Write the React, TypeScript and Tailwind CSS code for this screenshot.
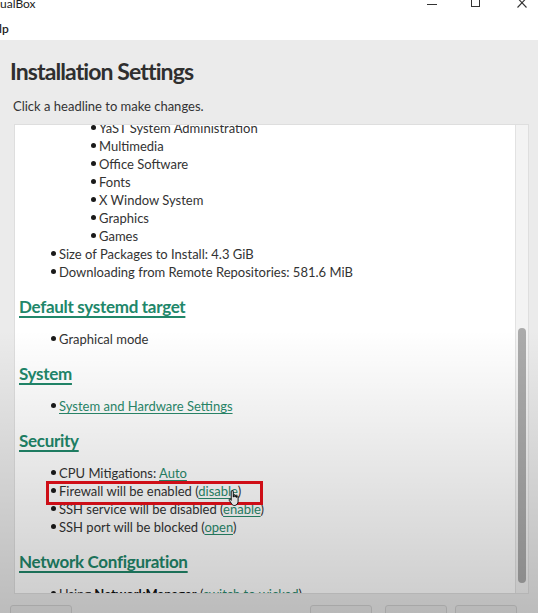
import React from 'react';

const font = { fontFamily: 'Lato, "Open Sans", sans-serif' };

const Dot = ({ className = '' }: { className?: string }) => (
  <span className={`inline-block w-[5px] h-[5px] rounded-full bg-[#1a1a1a] mr-[3px] mb-[2px] ${className}`} />
);

const Item = ({ children, sub }: { children: React.ReactNode; sub?: boolean }) => (
  <div className={`h-[18px] leading-[18px] flex items-center whitespace-nowrap ${sub ? 'pl-[76px]' : 'pl-[36px]'}`}>
    <Dot />
    <span>{children}</span>
  </div>
);

const Link = ({ children }: { children: React.ReactNode }) => (
  <span className="text-[#2a8a6c] underline decoration-[#2a8a6c] underline-offset-2">{children}</span>
);

const Heading = ({ children }: { children: React.ReactNode }) => (
  <div className="mt-[14px] mb-[11px] h-[24px] leading-[24px] pl-[4px] text-[17px] font-bold text-[#21876a] underline decoration-[1.5px] underline-offset-[3px] tracking-[-0.3px]">
    {children}
  </div>
);

const HandCursor = () => (
  <svg width="16" height="18" viewBox="0 0 16 18" className="absolute left-[227px] top-[489px]">
    <path
      d="M5 1.5c.8 0 1.3.6 1.3 1.3V8h.4V6.2c0-.8 1.2-.8 1.2 0V8h.4V6.8c0-.8 1.2-.8 1.2 0V8.4h.4V7.6c0-.8 1.2-.8 1.2 0v4.6c0 2.3-1.4 4.3-3.8 4.3H7.4c-1.3 0-2-.6-2.7-1.6L2.2 11.3c-.5-.7.4-1.6 1.1-.9l.9 1V2.8c0-.7.3-1.3.8-1.3z"
      fill="#fff"
      stroke="#111"
      strokeWidth="1"
    />
  </svg>
);

export default function App() {
  return (
    <div className="relative w-[538px] h-[613px] overflow-hidden bg-[#ebebeb] text-[#333]" style={font}>
      {/* title bar */}
      <div className="h-[16px] bg-white flex items-start relative">
        <span className="text-[12px] leading-[10px] -mt-[1px] text-[#222]">ualBox</span>
        <div className="absolute right-0 top-0 flex items-start">
          <div className="w-[10px] h-[1px] bg-[#333] mt-[4px] mr-[34px]" />
          <div className="w-[9px] h-[7px] border border-t-0 border-[#333] mr-[37px]" />
          <svg width="10" height="8" viewBox="0 0 10 8" className="mr-[11px]">
            <path d="M0.5 -2L9.5 7.5M9.5 -2L0.5 7.5" stroke="#333" strokeWidth="1.1" />
          </svg>
        </div>
      </div>
      {/* menu bar */}
      <div className="h-[24px] bg-white flex items-center">
        <span className="text-[12px] text-[#222] font-semibold -ml-[1px] mt-[2px]">lp</span>
      </div>

      <div className="pl-[10px] pt-[16px]">
        <h1 className="text-[23px] leading-[30px] font-bold text-[#2f2f2f] tracking-[-0.9px]">Installation Settings</h1>
        <p className="text-[13px] leading-[18px] mt-[11px] ml-[3px] text-[#333]">Click a headline to make changes.</p>
      </div>

      {/* content panel */}
      <div className="absolute left-[14px] top-[124px] w-[515px] h-[470px] border border-[#dedede] bg-white flex">
        <div className="flex-1 overflow-hidden text-[13px] text-[#333]">
          <div className="-mt-[6px]">
            <Item sub>YaST System Administration</Item>
            <Item sub>Multimedia</Item>
            <Item sub>Office Software</Item>
            <Item sub>Fonts</Item>
            <Item sub>X Window System</Item>
            <Item sub>Graphics</Item>
            <Item sub>Games</Item>
            <Item>Size of Packages to Install: 4.3 GiB</Item>
            <Item>Downloading from Remote Repositories: 581.6 MiB</Item>

            <Heading>Default systemd target</Heading>
            <Item>Graphical mode</Item>

            <Heading>System</Heading>
            <Item><Link>System and Hardware Settings</Link></Item>

            <Heading>Security</Heading>
            <Item>CPU Mitigations: <Link>Auto</Link></Item>
            <Item>Firewall will be enabled (<Link>disable</Link>)</Item>
            <Item>SSH service will be disabled (<Link>enable</Link>)</Item>
            <Item>SSH port will be blocked (<Link>open</Link>)</Item>

            <Heading>Network Configuration</Heading>
            <Item>Using <b className="text-[#111]">NetworkManager</b> (<Link>switch to wicked</Link>)</Item>
          </div>
        </div>
        {/* scrollbar */}
        <div className="w-[13px] bg-[#f3f3f3] border-l border-[#e2e2e2] flex flex-col items-center pt-[203px] pb-[10px]">
          <div className="w-[8px] flex-1 rounded-full bg-[#ababab]" />
        </div>
      </div>

      {/* bottom buttons */}
      <div className="absolute left-0 top-[605px] w-full h-[10px]">
        <div className="absolute left-[10px] w-[62px] h-[12px] rounded-t-[3px] border border-[#cfcfcf] bg-[#e6e6e6]" />
        <div className="absolute left-[310px] w-[62px] h-[12px] rounded-t-[3px] border border-[#cfcfcf] bg-[#e6e6e6]" />
        <div className="absolute left-[385px] w-[62px] h-[12px] rounded-t-[3px] border border-[#cfcfcf] bg-[#e6e6e6]" />
        <div className="absolute left-[455px] w-[62px] h-[12px] rounded-t-[3px] border border-[#cfcfcf] bg-[#e6e6e6]" />
      </div>

      {/* highlight box */}
      <div className="absolute left-[46px] top-[481px] w-[217px] h-[24px] border-[3px] border-[#e8101a]" />
      <HandCursor />

      {/* video vignette */}
      <div className="absolute inset-x-0 top-[330px] bottom-0 pointer-events-none bg-gradient-to-b from-transparent to-black/20" />
    </div>
  );
}
